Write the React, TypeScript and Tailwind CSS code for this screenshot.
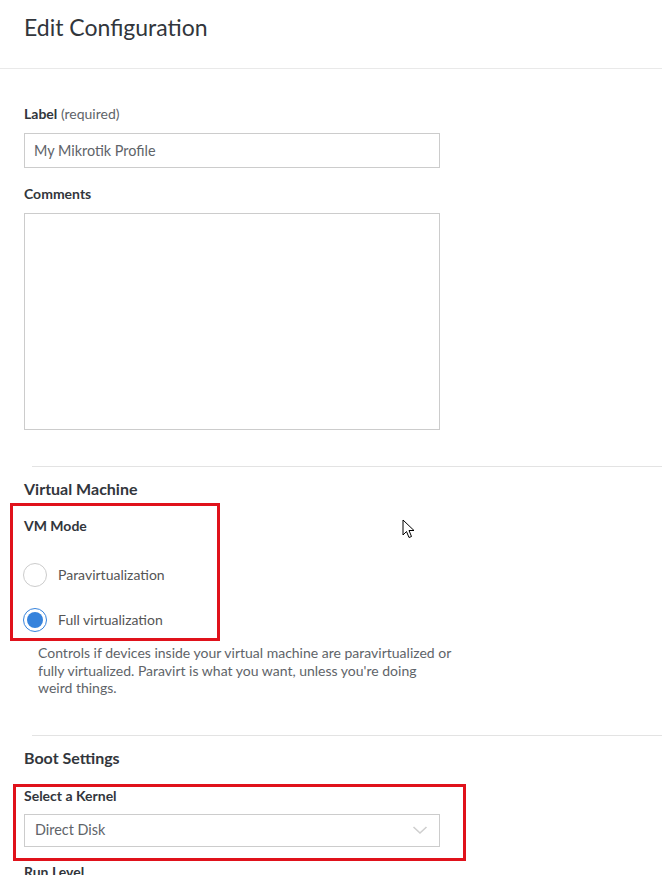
import React from "react";

function Radio({ checked, label }: { checked?: boolean; label: string }) {
  return (
    <div className="flex items-center h-[24px]">
      <div
        className={
          "w-[24px] h-[24px] rounded-full border flex items-center justify-center -ml-[1px] bg-white " +
          (checked ? "border-[#3683dc]" : "border-[#cccccc]")
        }
      >
        {checked && <div className="w-[16px] h-[16px] rounded-full bg-[#3683dc]" />}
      </div>
      <span className="ml-[11px] text-[14px] leading-[18px] text-[#555555]">{label}</span>
    </div>
  );
}

export default function App() {
  return (
    <div
      className="relative w-[662px] h-[875px] overflow-hidden bg-white"
      style={{ fontFamily: "Lato, 'Open Sans', 'Noto Sans', sans-serif" }}
    >
      <div className="h-[69px] border-b border-[#e9e9e9] pl-[24px] pt-[12px]">
        <h1 className="text-[23px] leading-[30px] text-[#32363c] font-normal">Edit Configuration</h1>
      </div>

      <div className="pl-[24px]">
        <div className="mt-[36px] text-[14px] leading-[18px] text-[#32363c]">
          <span className="font-bold">Label</span> <span className="text-[#606469]">(required)</span>
        </div>
        <div className="mt-[10px] w-[416px] h-[35px] border border-[#cccccc] flex items-center pl-[9px] text-[14.4px] text-[#606469]">
          My Mikrotik Profile
        </div>

        <div className="mt-[17px] text-[14px] leading-[18px] font-bold text-[#32363c]">Comments</div>
        <div className="mt-[10px] w-[416px] h-[217px] border border-[#cccccc]" />

        <div className="mt-[36px] ml-[8px] border-t border-[#e3e3e3]" />
        <div className="mt-[12px] text-[16px] leading-[20px] font-bold text-[#32363c]">Virtual Machine</div>

        <div className="mt-[4px] -ml-[14px] w-[210px] border-[3px] border-[#e0121b] pl-[11px] pt-[11px] pb-[6px]">
          <div className="text-[14px] leading-[18px] font-bold text-[#32363c]">VM Mode</div>
          <div className="mt-[28px]">
            <Radio label="Paravirtualization" />
          </div>
          <div className="mt-[21px]">
            <Radio checked label="Full virtualization" />
          </div>
        </div>

        <p className="mt-[3px] ml-[14px] w-[416px] text-[14px] leading-[17.5px] text-[#606469]">
          Controls if devices inside your virtual machine are paravirtualized or fully virtualized. Paravirt is
          what you want, unless you're doing weird things.
        </p>

        <div className="mt-[38px] ml-[8px] border-t border-[#e3e3e3]" />
        <div className="mt-[12px] text-[16px] leading-[20px] font-bold text-[#32363c]">Boot Settings</div>

        <div className="mt-[16px] -ml-[11px] w-[453px] border-[3px] border-[#e0121b] pl-[8px] pb-[11px]">
          <div className="text-[14px] leading-[18px] font-bold text-[#32363c]">Select a Kernel</div>
          <div className="mt-[9px] w-[416px] h-[33px] border border-[#cccccc] flex items-center justify-between pl-[10px] pr-[11px]">
            <span className="text-[14.4px] text-[#606469]">Direct Disk</span>
            <svg width="16" height="10" viewBox="0 0 16 10" fill="none">
              <path d="M1.5 2 L8 8 L14.5 2" stroke="#cfcfcf" strokeWidth="1.6" />
            </svg>
          </div>
        </div>

        <div className="mt-[2px] text-[14px] leading-[18px] font-bold text-[#32363c]">Run Level</div>
      </div>

      <svg
        className="absolute left-[402px] top-[519px]"
        width="14"
        height="21"
        viewBox="0 0 14 21"
      >
        <path
          d="M1 1 L1 16 L4.5 12.5 L7 18.5 L9.5 17.5 L7 11.5 L12 11.5 Z"
          fill="white"
          stroke="black"
          strokeWidth="1"
          strokeLinejoin="round"
        />
      </svg>
    </div>
  );
}
